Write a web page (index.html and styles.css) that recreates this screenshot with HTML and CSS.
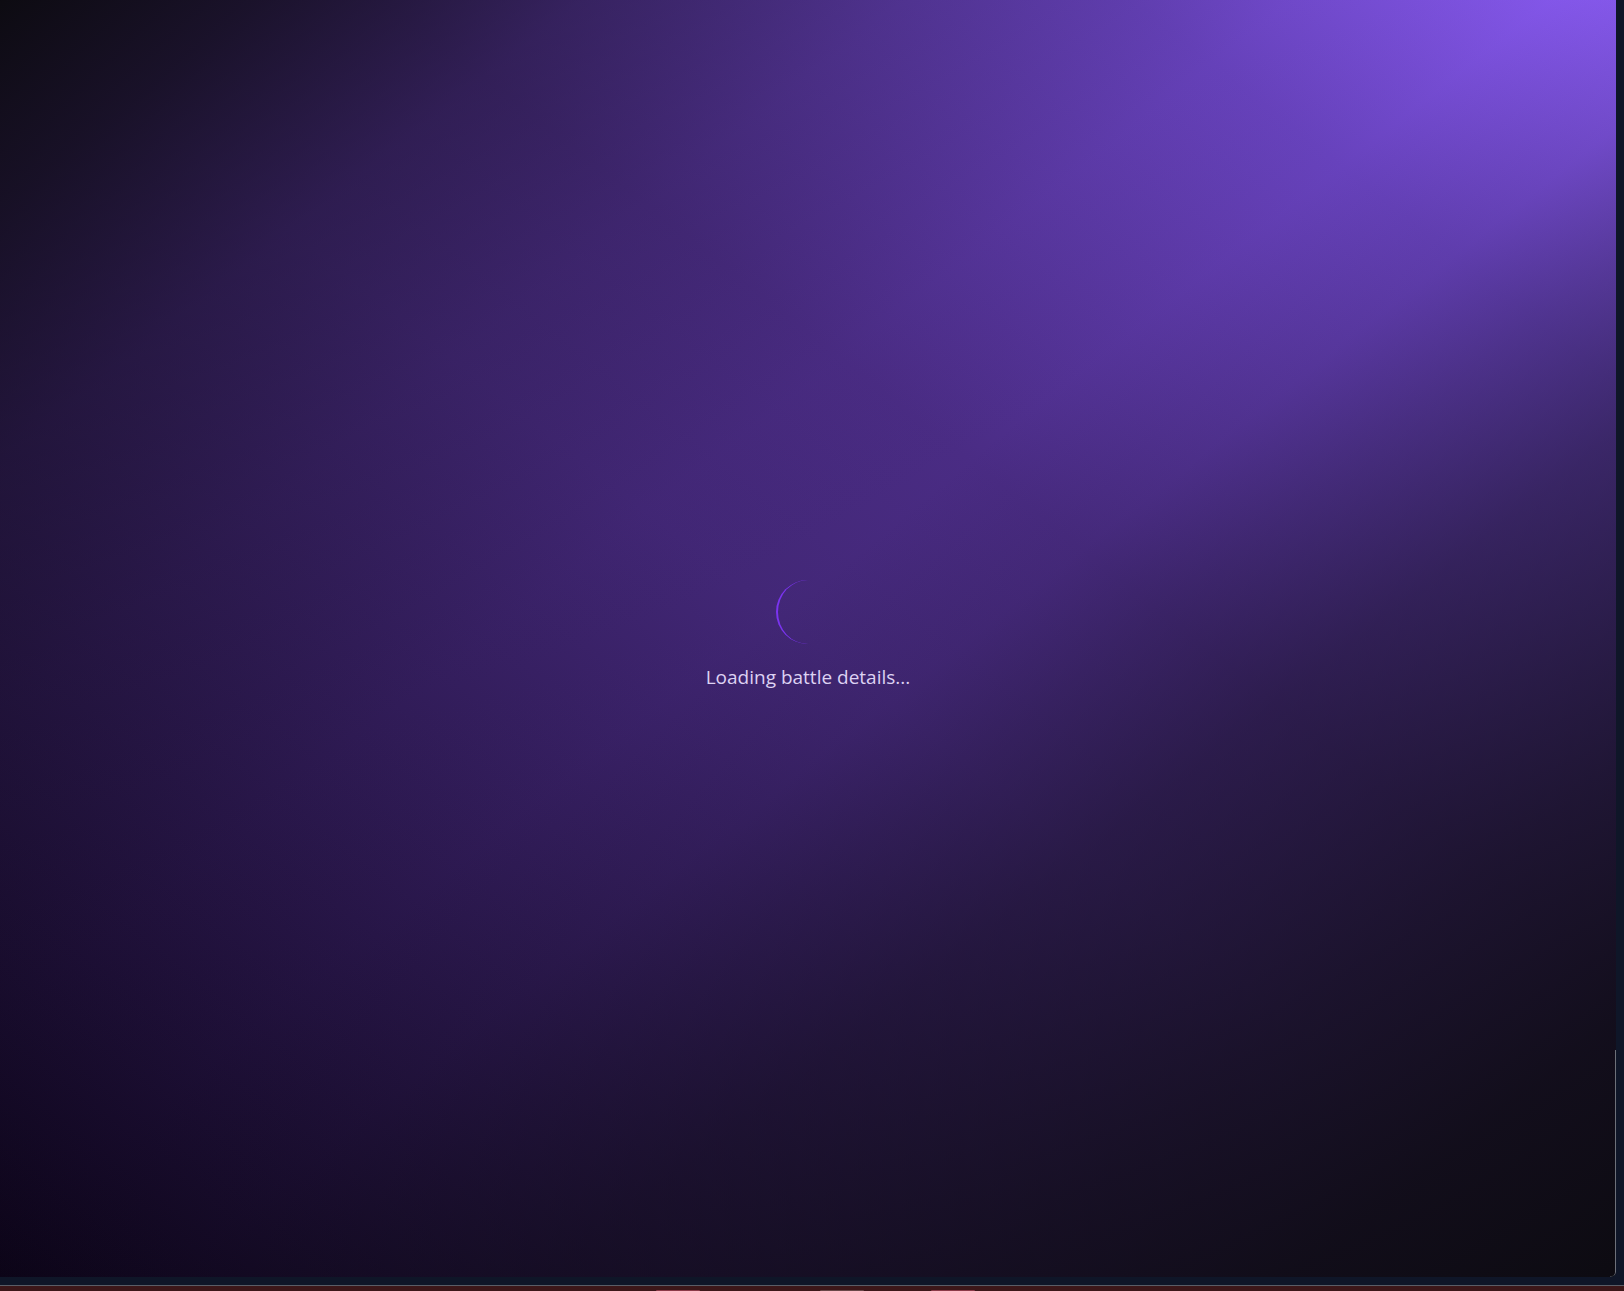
FILE: index.html
```html
<!DOCTYPE html>
<html lang="en">
<head>
<meta charset="utf-8">
<title>Loading battle details</title>
<link rel="stylesheet" href="styles.css">
</head>
<body>
<div class="window">
  <div class="top-row">
    <main class="panel">
      <div class="loader">
        <div class="spinner"></div>
        <p class="loading-text">Loading battle details...</p>
      </div>
      <div class="edge-line"></div>
    </main>
    <div class="side-strip"></div>
  </div>
  <div class="bottom-strip"></div>
  <div class="taskbar">
    <span class="tab tab-a"></span>
    <span class="tab tab-b"></span>
    <span class="tab tab-c"></span>
  </div>
</div>
</body>
</html>
```

FILE: styles.css
```css
* { box-sizing: border-box; }

html, body {
  margin: 0;
  padding: 0;
  width: 1624px;
  height: 1291px;
  overflow: hidden;
  background: #0f1628;
  font-family: "Open Sans", "Noto Sans", sans-serif;
}

.window {
  display: flex;
  flex-direction: column;
  width: 1624px;
  height: 1291px;
}

.top-row {
  display: flex;
  height: 1277px;
}

.panel {
  position: relative;
  width: 1616px;
  height: 1277px;
  border-bottom-right-radius: 5px;
  overflow: hidden;
  display: flex;
  align-items: center;
  justify-content: center;
  background:
    linear-gradient(to bottom right,
      rgba(11, 10, 14, 0.97) 0%,
      rgba(11, 10, 14, 0.75) 8%,
      rgba(11, 10, 14, 0.40) 18%,
      rgba(11, 10, 14, 0.20) 28%,
      rgba(11, 10, 14, 0.05) 40%,
      rgba(11, 10, 14, 0.03) 48%,
      rgba(11, 10, 14, 0.12) 55%,
      rgba(11, 10, 14, 0.28) 60%,
      rgba(11, 10, 14, 0.48) 67%,
      rgba(11, 10, 14, 0.72) 80%,
      rgba(11, 10, 14, 0.88) 90%,
      rgba(11, 10, 14, 0.97) 100%),
    linear-gradient(to bottom left,
      #8b5cf6 0%,
      #6a44c2 15%,
      #4c2d88 38%,
      #44287a 50%,
      #0c0418 100%);
}

.side-strip {
  width: 8px;
  background: #0f1628;
}

.loader {
  display: flex;
  flex-direction: column;
  align-items: center;
  margin-top: -6px;
}

.spinner {
  width: 64px;
  height: 64px;
  border-radius: 50%;
  border: 0 solid transparent;
  border-left: 2px solid #7b34f0;
  margin-bottom: 19px;
}

.loading-text {
  margin: 0;
  font-size: 19px;
  line-height: 28px;
  color: #ddd2f3;
}

.edge-line {
  position: absolute;
  right: 0;
  bottom: 0;
  width: 6px;
  height: 227px;
  border-right: 1px solid #6d7079;
  border-bottom: 1px solid #3a3c44;
  border-bottom-right-radius: 5px;
}

.bottom-strip {
  height: 8px;
  background: #0f1628;
  border-bottom: 1px solid #5a5d66;
  box-sizing: content-box;
}

.taskbar {
  flex: 1;
  background: #3c1719;
  position: relative;
  display: flex;
}

.tab {
  position: absolute;
  bottom: 0;
  height: 1px;
  border-radius: 2px 2px 0 0;
}

.tab-a { left: 656px; width: 44px; background: #8c3b49; }
.tab-b { left: 820px; width: 44px; background: #6a4849; }
.tab-c { left: 931px; width: 44px; background: #8c3b49; }
```
